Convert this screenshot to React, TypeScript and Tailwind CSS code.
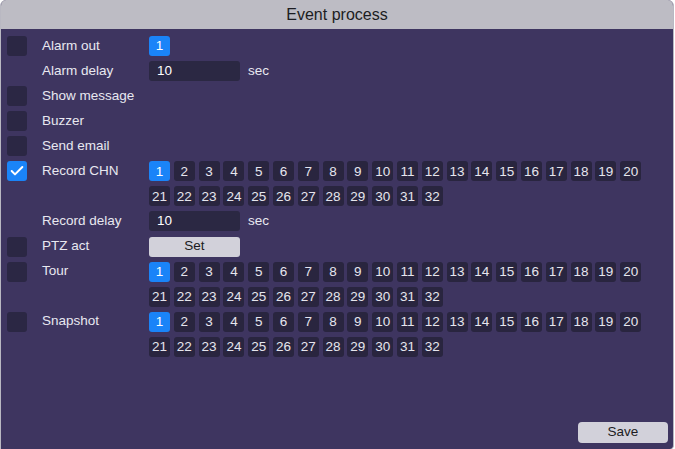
import { Check } from "lucide-react";

const channels = Array.from({ length: 32 }, (_, i) => i + 1);

type Row = {
  label: string;
  checkbox?: boolean;
  checked?: boolean;
  kind?: "channels" | "single" | "delay" | "set";
};

const rows: Row[] = [
  { label: "Alarm out", checkbox: true, kind: "single" },
  { label: "Alarm delay", kind: "delay" },
  { label: "Show message", checkbox: true },
  { label: "Buzzer", checkbox: true },
  { label: "Send email", checkbox: true },
  { label: "Record CHN", checkbox: true, checked: true, kind: "channels" },
  { label: "Record delay", kind: "delay" },
  { label: "PTZ act", checkbox: true, kind: "set" },
  { label: "Tour", checkbox: true, kind: "channels" },
  { label: "Snapshot", checkbox: true, kind: "channels" },
];

function ChannelBox({ n, active }: { n: number; active?: boolean }) {
  return (
    <div
      className={`flex h-5 w-[21px] items-center justify-center rounded-[3px] text-[13.5px] leading-none ${
        active ? "bg-[#1a84f8] text-white" : "bg-[#29253f] text-[#e6e6ee]"
      }`}
    >
      {n}
    </div>
  );
}

function Channels() {
  return (
    <div className="grid w-[492px] grid-cols-[repeat(20,21px)] gap-x-[3.8px] gap-y-[5px]">
      {channels.map((n) => (
        <ChannelBox key={n} n={n} active={n === 1} />
      ))}
    </div>
  );
}

function Checkbox({ checked }: { checked?: boolean }) {
  return (
    <div
      className={`flex h-5 w-5 items-center justify-center rounded-[3px] ${
        checked ? "bg-[#1a84f8]" : "bg-[#2b2744]"
      }`}
    >
      {checked && <Check className="h-4 w-4 text-white" strokeWidth={3} />}
    </div>
  );
}

export default function App() {
  return (
    <div
      className="h-[449px] w-[675px] bg-white"
      style={{ fontFamily: '"Liberation Sans", Arial, sans-serif' }}
    >
      <div className="flex h-full w-[674px] flex-col overflow-hidden rounded-t-[6px] rounded-br-[4px] border-x border-[#b9b8c2] bg-[#3e3560]">
        <div className="flex h-[29px] items-center justify-center bg-[#bdbcc4] text-[16px] text-[#1c1c22]">
          Event process
        </div>

        <div className="flex flex-1 flex-col pt-[7px] text-[13.5px] text-[#e8e8f0]">
          {rows.map((row) => (
            <div key={row.label} className="flex items-start">
              <div className="flex w-[41px] shrink-0 justify-start pl-[6px]">
                {row.checkbox ? <Checkbox checked={row.checked} /> : <div className="h-5 w-5" />}
              </div>
              <div className="flex h-5 w-[107px] shrink-0 items-center">{row.label}</div>
              <div className="flex min-h-[25px] flex-col pb-[5px]">
                {row.kind === "single" && <ChannelBox n={1} active />}
                {row.kind === "channels" && <Channels />}
                {row.kind === "delay" && (
                  <div className="flex items-center">
                    <div className="flex h-5 w-[91px] items-center rounded-[3px] bg-[#2b2843] pl-2 text-white">
                      10
                    </div>
                    <span className="ml-2">sec</span>
                  </div>
                )}
                {row.kind === "set" && (
                  <div className="flex h-5 w-[91px] items-center justify-center rounded-[3px] bg-[#d2d1da] text-[#1c1c22]">
                    Set
                  </div>
                )}
                {!row.kind && <div className="h-5" />}
              </div>
            </div>
          ))}

          <div className="mt-auto flex justify-end pb-[6px] pr-[5px]">
            <div className="flex h-[21px] w-[90px] items-center justify-center rounded-[4px] bg-[#d2d1da] text-[#1c1c22]">
              Save
            </div>
          </div>
        </div>
      </div>
    </div>
  );
}
